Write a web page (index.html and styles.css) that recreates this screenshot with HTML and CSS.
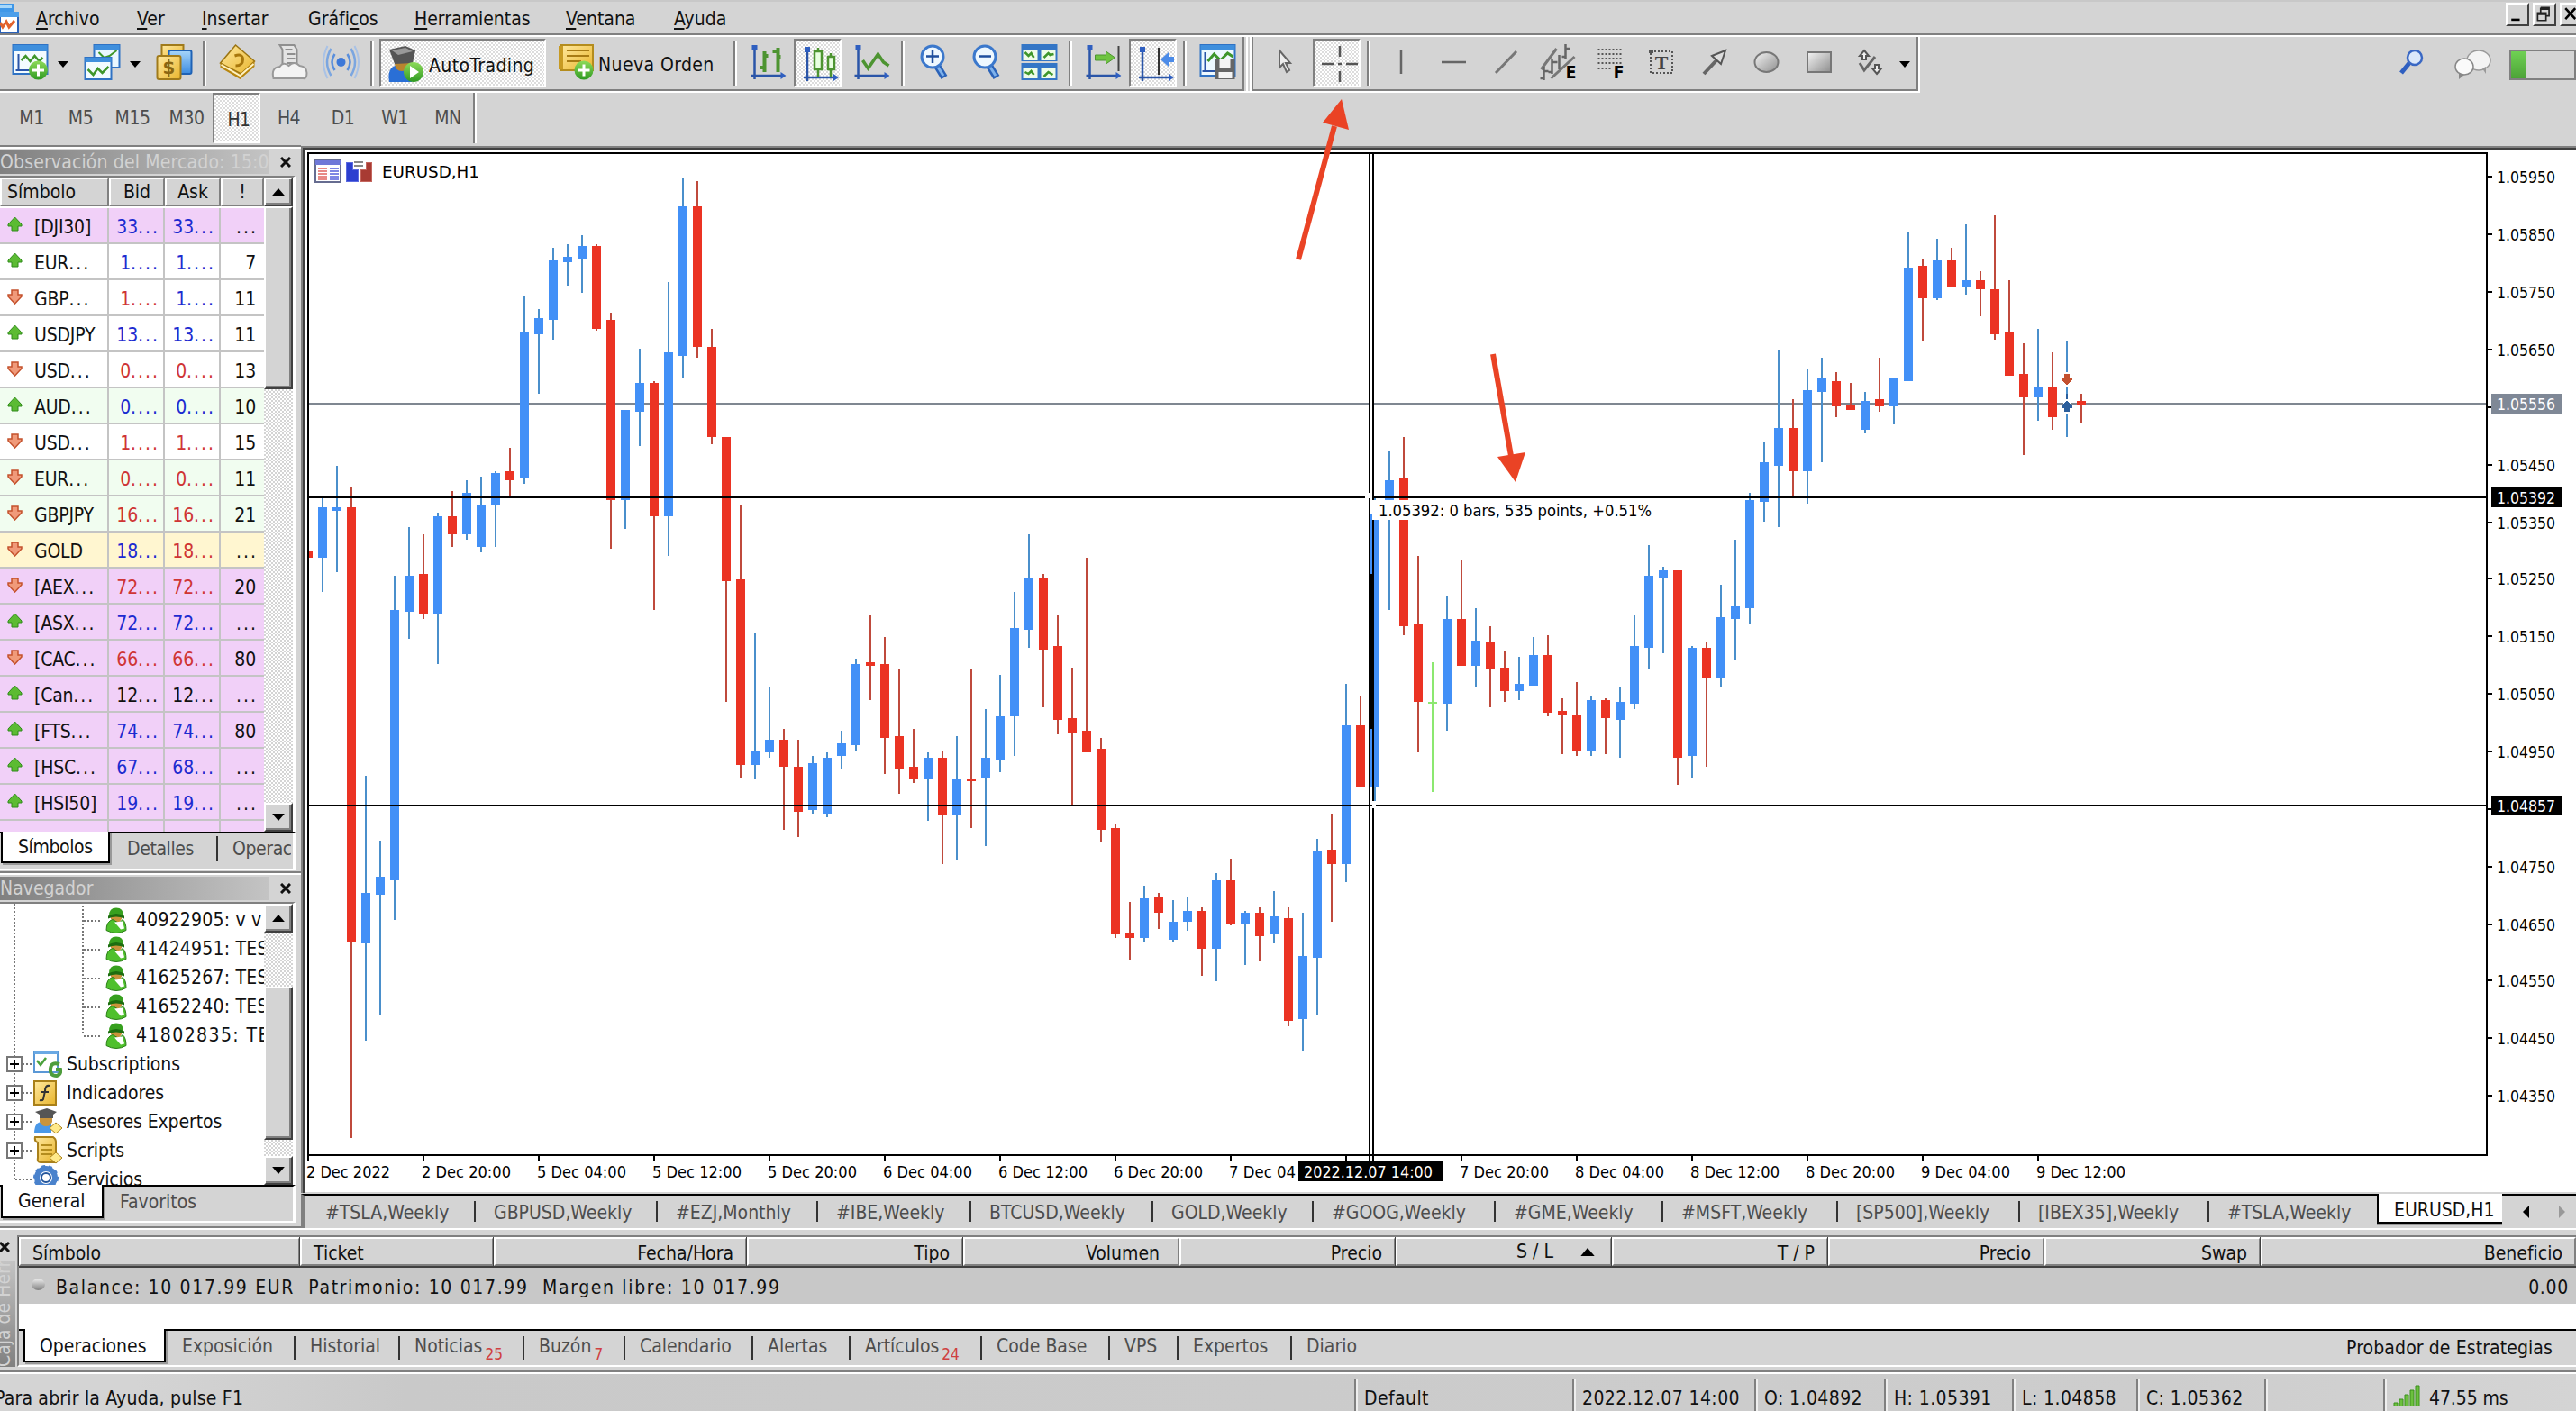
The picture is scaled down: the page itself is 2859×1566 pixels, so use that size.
FILE: index.html
```html
<!DOCTYPE html>
<html lang="es">
<head>
    <meta charset="UTF-8">
    <meta name="viewport" content="width=device-width, initial-scale=1.0">
    <title>EURUSD,H1</title>
    <link rel="stylesheet" href="styles.css">
</head>
<body>
    <!-- shared icon parts -->
    <svg width="0" height="0" class="defs">
        <defs>
            <linearGradient id="gold" x1="0" y1="0" x2="1" y2="1"><stop offset="0" stop-color="#ffe9a0"/><stop offset="1" stop-color="#e9b52c"/></linearGradient>
            <linearGradient id="blue" x1="0" y1="0" x2="0" y2="1"><stop offset="0" stop-color="#a8d6fa"/><stop offset="1" stop-color="#3b8be0"/></linearGradient>
            <linearGradient id="green" x1="0" y1="0" x2="0" y2="1"><stop offset="0" stop-color="#8edb5a"/><stop offset="1" stop-color="#2f9a22"/></linearGradient>
            <linearGradient id="gray" x1="0" y1="0" x2="1" y2="1"><stop offset="0" stop-color="#f4f4f4"/><stop offset="1" stop-color="#8e8e8e"/></linearGradient>
            <symbol id="i-plus" viewBox="0 0 22 22"><circle cx="11" cy="11" r="10.5" fill="url(#green)"/><path d="M11 4.5v13M4.500 11h13" stroke="#fff" stroke-width="3"/></symbol>
            <symbol id="i-axes" viewBox="0 0 40 40"><path d="M5 3v36M1 35h36" stroke="#2a55a8" stroke-width="2.500"/><path d="M2 1h6v6H2zM34 31l6 4-6 4z" fill="#2f5fc0"/></symbol>
            <symbol id="i-user" viewBox="0 0 24 30"><path d="M4 10Q4 1 12 1t8 9l-3 2H7z" fill="#37a01e"/><path d="M6 10h12v3q-2 5-6 5t-6-5z" fill="#c9933a"/><path d="M3 10q9-5 18 0v3q-9-4-18 0z" fill="#1d6d10"/><path d="M1 26q0-10 7-12l7 4 4-4q4 3 4 12-11 6-22 0z" fill="#4fc02c" stroke="#2b7f17"/><path d="M10 17l9-1 2 8-4 1z" fill="#fff"/></symbol>
            <symbol id="i-caret" viewBox="0 0 12 7"><path d="M0 0h12L6 7z"/></symbol>
        </defs>
    </svg>

    <div class="menubar">
        <svg class="app-icon" viewBox="0 0 22 33"><path d="M0 0h16v9H0z" fill="#3f97e8"/><path d="M0 2h13v3H0z" fill="#a8d8fa"/><path d="M0 10h20v22H0z" fill="#fff" stroke="#2b62b8" stroke-width="2"/><path d="M0 9h21v6H0z" fill="#4b9eea"/><path d="M0 21l3 5 4-6 3 6 6-7" fill="none" stroke="#e2622c" stroke-width="3"/></svg>
        <span><u>A</u>rchivo</span>
        <span><u>V</u>er</span>
        <span><u>I</u>nsertar</span>
        <span>Gráfi<u>c</u>os</span>
        <span><u>H</u>erramientas</span>
        <span><u>V</u>entana</span>
        <span><u>A</u>yuda</span>
        <div class="win-buttons">
            <svg viewBox="0 0 26 26"><path d="M5 20h11" stroke="#000" stroke-width="3"/></svg>
            <svg viewBox="0 0 26 26"><path d="M8 4h11v11h-4M8 4v6M8 6h11M4 11h11v10H4zM4 13h11" fill="none" stroke="#222" stroke-width="2"/></svg>
            <svg viewBox="0 0 26 26"><path d="M5 5l13 14M18 5L5 19" stroke="#000" stroke-width="3"/></svg>
        </div>
    </div>

    <div class="toolbar-row">
        <div class="toolbar">
            <svg class="ico" viewBox="0 0 40 40"><path d="M1 1h38v32H1z" fill="#f2fbff" stroke="#2f72c4" stroke-width="2"/><path d="M1 1h38v7H1z" fill="#3f8fdd"/><path d="M7 11v19M4 29h30" stroke="#2a55a8" stroke-width="2"/><path d="M10 18l5-5 5 6 5-6 5 6 4-4" fill="none" stroke="#3e962b" stroke-width="2.500"/><use href="#i-plus" x="18" y="18" width="22" height="22"/></svg>
            <svg class="caret"><use href="#i-caret"/></svg>
            <svg class="ico" viewBox="0 0 40 40"><path d="M11 1h28v25H11z" fill="#eaf7ff" stroke="#2f72c4" stroke-width="2"/><path d="M11 1h28v6H11z" fill="#3f8fdd"/><path d="M16 9l6 6 6-2 8-6" fill="none" stroke="#3e962b" stroke-width="2"/><path d="M1 15h29v24H1z" fill="#f2fbff" stroke="#2f72c4" stroke-width="2"/><path d="M1 15h29v5H1z" fill="#3f8fdd"/><path d="M4 28l6 6 5-7 5 5 7-7" fill="none" stroke="#3e962b" stroke-width="2.500"/></svg>
            <svg class="caret"><use href="#i-caret"/></svg>
            <svg class="ico" viewBox="0 0 40 40"><path d="M6 1h24v16H6z" fill="url(#gold)" stroke="#a07a1a" stroke-width="2"/><rect x="14" y="7" width="25" height="26" rx="2" fill="url(#blue)" stroke="#1f62b5" stroke-width="2"/><rect x="1" y="13" width="26" height="26" rx="2" fill="url(#gold)" stroke="#a07a1a" stroke-width="2"/><text x="14" y="33" class="glyph" font-size="22" fill="#8a6510">$</text></svg>
            <i class="sep"></i>
            <svg class="ico" viewBox="0 0 40 40"><path d="M18 1l21 18-15 14L1 21z" fill="url(#gold)" stroke="#9b7412" stroke-width="1.500"/><path d="M1 21l22 12v6L1 26zM23 33l16-14v6L23 39z" fill="#b8860f"/><path d="M2 23l21 12 15-13" fill="none" stroke="#fff3c4" stroke-width="2"/><path d="M17 13q9-3 9 4t-8 7" fill="none" stroke="#a8770c" stroke-width="3"/></svg>
            <svg class="ico" viewBox="0 0 40 40"><path d="M9 1h16l3 5v24H12V6z" fill="#e4e4e4" stroke="#8f8f8f" stroke-width="2"/><path d="M15 6h8M17 11h9M17 16h9M17 21h9" stroke="#8f8f8f" stroke-width="2"/><path d="M2 38q-3-12 7-13 4-6 10-1 6-6 12 0 8 1 8 8t-4 6z" fill="#f3f3f3" stroke="#999" stroke-width="2"/></svg>
            <svg class="ico" viewBox="0 0 40 40"><circle cx="20" cy="20" r="5" fill="#3c78d8"/><path d="M13 11q-6 9 0 18M27 11q6 9 0 18" fill="none" stroke="#5a8fdc" stroke-width="2.500"/><path d="M9 5q-9 15 0 30M31 5q9 15 0 30" fill="none" stroke="#7ba6e0" stroke-width="2.500"/><path d="M5 2q-9 18 0 36M35 2q9 18 0 36" fill="none" stroke="#a9c2e6" stroke-width="2"/></svg>
            <i class="sep"></i>
            <div class="tb-button pressed auto">
                <svg class="ico" viewBox="0 0 40 40"><path d="M2 40q-3-16 9-19l12 3 4 16z" fill="#2a6fd6"/><path d="M8 12h18v8q-3 8-10 8t-8-8z" fill="#b9842e"/><path d="M2 4l18-4 11 5-3 14-20 1z" fill="#555"/><path d="M5 5l15-3 8 4-16 4z" fill="#999"/><circle cx="29" cy="29" r="11" fill="url(#green)"/><path d="M25 22l10 7-10 7z" fill="#fff"/></svg>
                <span>AutoTrading</span>
            </div>
            <div class="tb-button order">
                <svg class="ico" viewBox="0 0 40 40"><path d="M3 1h36v28H3z" fill="url(#gold)" stroke="#b48c1d" stroke-width="2"/><path d="M10 7h25M10 13h25M10 19h16" stroke="#a87b14" stroke-width="2"/><path d="M1 2h5v26H1z" fill="#c79a23"/><use href="#i-plus" x="18" y="18" width="22" height="22"/></svg>
                <span>Nueva Orden</span>
            </div>
            <i class="sep"></i>
            <svg class="ico" viewBox="0 0 40 40"><use href="#i-axes"/><path d="M16 8v23M11 26h5M16 13h4M31 4v27M25 8h6M31 14h3" stroke="#4d9431" stroke-width="4" fill="none"/></svg>
            <div class="tb-button pressed"><svg class="ico" viewBox="0 0 40 40"><use href="#i-axes"/><path d="M17 2v32M31 8v26" stroke="#4d9431" stroke-width="2.500"/><path d="M13 6h8v20h-8zM28 12h7v14h-7z" fill="#e8ffe0" stroke="#4d9431" stroke-width="2.500"/></svg></div>
            <svg class="ico" viewBox="0 0 40 40"><use href="#i-axes"/><path d="M10 18l6 9 11-16 6 9 6 4" fill="none" stroke="#4d9431" stroke-width="3.500"/></svg>
            <i class="sep"></i>
            <svg class="ico lens" viewBox="0 0 34 40"><path d="M20 24l8 13" stroke="#2a62b8" stroke-width="8"/><path d="M20 24l7 11" stroke="#7eb2ec" stroke-width="3"/><circle cx="15" cy="14" r="12" fill="#eef8ff" stroke="#3b78cc" stroke-width="3"/><path d="M15 7v14M8 13.500h14" stroke="#1f4f9e" stroke-width="2.500"/></svg>
            <svg class="ico lens" viewBox="0 0 34 40"><path d="M20 24l8 13" stroke="#2a62b8" stroke-width="8"/><path d="M20 24l7 11" stroke="#7eb2ec" stroke-width="3"/><circle cx="15" cy="14" r="12" fill="#eef8ff" stroke="#3b78cc" stroke-width="3"/><path d="M8 13.500h14" stroke="#1f4f9e" stroke-width="2.500"/></svg>
            <svg class="ico" viewBox="0 0 40 40"><path d="M0 0h40v19H0zM0 21h40v19H0z" fill="#3476c6"/><path d="M2 6h16v12H2zM22 6h16v12H22zM2 27h16v11H2zM22 27h16v11H22z" fill="#effce8"/><path d="M4 9l4 4 3-3 3 5M25 15l5-5 2 2 4-1M4 31l4 2 3-3 3 4M25 36l5-5 5 3" fill="none" stroke="#3e962b" stroke-width="2.500"/></svg>
            <i class="sep"></i>
            <svg class="ico" viewBox="0 0 40 40"><use href="#i-axes"/><path d="M37 2v28" stroke="#444" stroke-width="2"/><path d="M11 12h12V8l10 7-10 7v-4H11z" fill="#6fc441" stroke="#4d9431"/></svg>
            <div class="tb-button pressed"><svg class="ico" viewBox="0 0 40 40"><use href="#i-axes"/><path d="M23 2v30" stroke="#333" stroke-width="2"/><path d="M40 12h-6V7l-9 8 9 8v-5h6z" fill="#4b8be8"/></svg></div>
            <i class="sep"></i>
            <svg class="ico" viewBox="0 0 40 40"><path d="M1 1h38v34H1z" fill="#eef9ff" stroke="#2f72c4" stroke-width="2"/><path d="M1 1h38v6H1z" fill="#3f8fdd"/><path d="M6 9v22M3 30h14" stroke="#2a55a8" stroke-width="2"/><path d="M9 19l7-8 7 7 8-8 6 4" fill="none" stroke="#3e962b" stroke-width="3"/><path d="M17 17h22v22H17z" fill="#666"/><path d="M22 16h12v10H22zM21 31h15v7H21z" fill="#f4f4f4"/></svg>
            <i class="grip"></i>
            <svg class="ico tool" viewBox="0 0 28 28"><path d="M2 1v19l4-4 4 9 3-2-4-8h5z" fill="#eee" stroke="#666" stroke-width="2"/></svg>
            <div class="tb-button pressed"><svg class="ico" viewBox="0 0 40 40"><path d="M20 0v12M20 28v12M0 20h13M27 20h13M18 20h4" stroke="#555" stroke-width="2.500"/></svg></div>
            <i class="sep"></i>
            <svg class="ico tool" viewBox="0 0 28 28"><path d="M6 1v26" stroke="#666" stroke-width="2.500"/></svg>
            <svg class="ico tool" viewBox="0 0 28 28"><path d="M0 14h27" stroke="#666" stroke-width="2.500"/></svg>
            <svg class="ico tool" viewBox="0 0 28 28"><path d="M1 26L24 2" stroke="#777" stroke-width="3"/></svg>
            <svg class="ico" viewBox="0 0 40 40"><path d="M1 28L18 5M12 38L38 14" stroke="#777" stroke-width="3"/><path d="M4 25v15M0 38h4M4 30h5M13 17v16M9 31h4M13 20h6M28 0v16M24 14h4M28 5h5M21 12v16" stroke="#666" stroke-width="2.500"/><text x="34" y="38" class="glyph" font-size="19">E</text></svg>
            <svg class="ico" viewBox="0 0 40 40"><path d="M0 6h28M0 11h28M0 16h28M0 21h28M0 27h15" stroke="#555" stroke-width="2" stroke-dasharray="2 2"/><text x="23" y="38" class="glyph" font-size="19">F</text></svg>
            <svg class="ico tool" viewBox="0 0 28 28"><path d="M2 2h24v24H2z" fill="none" stroke="#555" stroke-width="2" stroke-dasharray="2 2"/><path d="M0 0h5v4H0z" fill="#555"/><text x="14" y="22" class="glyph serif" font-size="22" fill="#444">T</text></svg>
            <svg class="ico tool" viewBox="0 0 28 28"><path d="M2 27L16 12" stroke="#666" stroke-width="4"/><path d="M11 7L26 1l-5 15z" fill="#ddd" stroke="#555" stroke-width="2"/></svg>
            <svg class="ico tool" viewBox="0 0 28 28"><ellipse cx="14.500" cy="14" rx="13" ry="11" fill="url(#gray)" stroke="#777" stroke-width="2"/></svg>
            <svg class="ico tool" viewBox="0 0 28 28"><path d="M1 3h26v22H1z" fill="url(#gray)" stroke="#777" stroke-width="2"/></svg>
            <svg class="ico tool" viewBox="0 0 28 28"><path d="M7 1l5 6H9v4H5V7H2zM21 27l5-6h-3v-4h-4v4h-3z" fill="#eee" stroke="#555" stroke-width="2"/><path d="M2 15l5 8L19 8" fill="none" stroke="#666" stroke-width="3"/></svg>
            <svg class="caret"><use href="#i-caret"/></svg>
        </div>
        <div class="tools-right">
            <svg class="search" viewBox="0 0 28 28"><path d="M2 26l9-11" stroke="#2f5fc0" stroke-width="5"/><ellipse cx="17" cy="9" rx="8" ry="8" fill="#dce9fb" stroke="#3a68c4" stroke-width="2.500"/></svg>
            <svg class="chat" viewBox="0 0 44 34"><ellipse cx="28" cy="12" rx="13" ry="11" fill="#f4f4f4" stroke="#999" stroke-width="1.500"/><path d="M32 21l4 6v-8z" fill="#999"/><ellipse cx="12" cy="19" rx="10" ry="9" fill="#fafafa" stroke="#888" stroke-width="1.500"/><path d="M6 26l0 7 6-5z" fill="#888"/></svg>
            <div class="battery"><i></i></div>
        </div>
    </div>

    <div class="timeframes">
        <div class="tf-list">
            <span>M1</span><span>M5</span><span>M15</span><span>M30</span><span class="pressed">H1</span><span>H4</span><span>D1</span><span>W1</span><span>MN</span>
        </div>
    </div>

    <div class="workspace">
        <div class="side">
            <div class="panel market">
                <div class="caption"><span class="caption-text wide">Observación del Mercado: 15:0</span><svg class="close" viewBox="0 0 12 12"><path d="M1 1l10 10M11 1L1 11"/></svg></div>
                <div class="panel-body">
                    <div class="watch">
                        <div class="watch-head"><span>Símbolo</span><span>Bid</span><span>Ask</span><span>!</span></div>
                        <div class="watch-rows"></div>
                    </div>
                    <div class="scroll">
                        <b><svg><use href="#i-caret" class="flip"/></svg></b><i class="thumb"></i><i class="track"></i><b><svg><use href="#i-caret"/></svg></b>
                    </div>
                </div>
                <div class="side-tabs market-tabs"><span class="active">Símbolos</span><span>Detalles</span><span class="cut">Operac</span></div>
            </div><!--market-->

            <div class="panel navigator">
                <div class="caption"><span class="caption-text">Navegador</span><svg class="close" viewBox="0 0 12 12"><path d="M1 1l10 10M11 1L1 11"/></svg></div>
                <div class="panel-body">
                    <div class="tree">
                        <div class="account"><svg><use href="#i-user"/></svg>40922905: v v</div>
                        <div class="account"><svg><use href="#i-user"/></svg>41424951: TES</div>
                        <div class="account"><svg><use href="#i-user"/></svg>41625267: TES</div>
                        <div class="account"><svg><use href="#i-user"/></svg>41652240: TES</div>
                        <div class="account last"><svg><use href="#i-user"/></svg>41802835: TE</div>
                        <div class="node"><i class="plus"></i><svg viewBox="0 0 32 32"><path d="M1 2h26v23H1z" fill="#fff" stroke="#5a98d6" stroke-width="2"/><path d="M1 1h26v4H1z" fill="#6aa9e4"/><path d="M4 12l4 5 6-8" fill="none" stroke="#4aa13c" stroke-width="2.500"/><path d="M29 16q-9-3-10 5t7 8q5-2 4-7h-5" fill="none" stroke="#4d9c3c" stroke-width="4"/></svg>Subscriptions</div>
                        <div class="node"><i class="plus"></i><svg viewBox="0 0 32 32"><path d="M1 3h24v26H1z" fill="url(#gold)" stroke="#a9801a" stroke-width="2"/><path d="M18 8q-5-1-5 6l-2 9q-1 2-4 1M8 15h9" fill="none" stroke="#333" stroke-width="2"/></svg>Indicadores</div>
                        <div class="node"><i class="plus"></i><svg viewBox="0 0 32 32"><path d="M1 29q0-13 9-13l10 3v10z" fill="#4a98e8"/><path d="M7 9h14v7q-2 5-7 5t-7-5z" fill="#c9943c"/><path d="M2 5l13-4 11 4-4 3v4H7V8z" fill="#555"/><path d="M25 17l7 6-7 6-7-6z" fill="#ffe98a" stroke="#a9801a"/></svg>Asesores Expertos</div>
                        <div class="node"><i class="plus"></i><svg viewBox="0 0 32 32"><path d="M2 1h20q3 2 3 5v23H8q-4 0-3-5V7Q1 6 2 1z" fill="url(#gold)" stroke="#a9801a" stroke-width="2"/><path d="M9 10h12M9 15h12M9 20h12" stroke="#b48c1d" stroke-width="2"/><path d="M25 18l7 6-7 6-7-6z" fill="#ffe98a" stroke="#a9801a"/></svg>Scripts</div>
                        <div class="node"><i class="plus none"></i><svg viewBox="0 0 32 32"><circle cx="14" cy="14" r="10" fill="none" stroke="#4a82cc" stroke-width="6"/><circle cx="14" cy="14" r="13" fill="none" stroke="#4a82cc" stroke-width="2" stroke-dasharray="4 4"/><circle cx="14" cy="14" r="5" fill="#fff" stroke="#24569c" stroke-width="2"/><path d="M20 24h12v6H20z" fill="#4a82cc"/></svg>Servicios</div>
                    </div>
                    <div class="scroll nav-scroll">
                        <b><svg><use href="#i-caret" class="flip"/></svg></b><i class="track first"></i><i class="thumb"></i><i class="track"></i><b><svg><use href="#i-caret"/></svg></b>
                    </div>
                </div>
                <div class="side-tabs nav-tabs"><span class="active">General</span><span>Favoritos</span></div>
            </div><!--navigator-->
        </div>

        <div class="chart-area">
            <div class="chart-frame"><svg id="chart" viewBox="338 166 2521 1157"></svg></div>
            <div class="chart-tabs">
                <span>#TSLA,Weekly</span><span>GBPUSD,Weekly</span><span>#EZJ,Monthly</span><span>#IBE,Weekly</span><span>BTCUSD,Weekly</span><span>GOLD,Weekly</span><span>#GOOG,Weekly</span><span>#GME,Weekly</span><span>#MSFT,Weekly</span><span>[SP500],Weekly</span><span>[IBEX35],Weekly</span><span>#TSLA,Weekly</span><span class="active">EURUSD,H1</span>
                <svg class="tab-arrows" viewBox="0 0 60 16"><path d="M8 1v14L1 8z"/><path d="M41 1v14l7-7z" fill="#999"/></svg>
            </div>
        </div>
    </div><!--workspace-->

    <div class="terminal">
        <div class="terminal-side">
            <svg class="close" viewBox="0 0 12 12"><path d="M1 1l10 10M11 1L1 11"/></svg>
            <div class="vertical"><span>Caja de Herramientas</span></div>
        </div>
        <div class="terminal-main">
            <div class="orders-head">
                <span>Símbolo</span><span>Ticket</span><span>Fecha/Hora</span><span>Tipo</span><span class="volume">Volumen</span><span>Precio</span><span class="sorted">S / L<svg><use href="#i-caret" class="flip"/></svg></span><span>T / P</span><span>Precio</span><span>Swap</span><span>Beneficio</span>
            </div>
            <div class="balance"><i class="dot"></i><span>Balance: 10 017.99 EUR&nbsp; Patrimonio: 10 017.99&nbsp; Margen libre: 10 017.99</span><span class="profit">0.00</span></div>
            <div class="blank"></div>
            <div class="terminal-tabs">
                <span class="active">Operaciones</span><span>Exposición</span><span>Historial</span><span>Noticias<sub>25</sub></span><span>Buzón<sub>7</sub></span><span>Calendario</span><span>Alertas</span><span>Artículos<sub>24</sub></span><span>Code Base</span><span>VPS</span><span>Expertos</span><span>Diario</span>
                <span class="tester">Probador de Estrategias</span>
            </div>
        </div>
    </div><!--terminal-->

    <div class="statusbar">
        <span class="help">Para abrir la Ayuda, pulse F1</span><span>Default</span><span>2022.12.07 14:00</span><span>O: 1.04892</span><span>H: 1.05391</span><span>L: 1.04858</span><span>C: 1.05362</span><span></span>
        <span><svg class="signal" viewBox="0 0 30 24"><path d="M1 20h4v4H1zM7 16h4v8H7zM13 11h4v13h-4zM19 6h4v18h-4zM25 1h4v23h-4z" fill="#6cc03e" stroke="#3b8f1d"/></svg>47.55 ms</span>
    </div>

    <svg class="pointers" viewBox="0 0 2859 600">
        <path d="M1441 288L1481 140" /><path d="M1489 110L1468 136L1497 144Z" class="head"/>
        <path d="M1657 393L1677 506" /><path d="M1682 535L1662 507L1693 502Z" class="head"/>
    </svg>
    <script src="script.js"></script>
</body>
</html>
```
FILE: styles.css
```css
*{
    margin : 0;
    padding : 0;
    box-sizing: border-box;
}
body{
    width: 2859px;
    height: 1566px;
    overflow: hidden;
    position: relative;
    display: flex;
    flex-direction: column;
    background-color: #d4d4d4;
    color: #111;
    font-family: 'DejaVu Sans Condensed', 'DejaVu Sans', sans-serif;
    font-size: 21px;
    white-space: nowrap;
}
svg{
    display: block;
    flex: none;
}
.defs{
    position: absolute;
}
i, b{
    display: block;
    flex: none;
}

/* menu */
.menubar{
    height: 41px;
    flex: none;
    display: grid;
    grid-template-columns: 40px 112px 72px 118px 118px 168px 120px 2033px 78px;
    align-items: center;
    border-top: 2px solid #c8c8c8;
    border-bottom: 2px solid #fff;
    box-shadow: inset 0 -2px #808080;
}
.menubar span{
    padding-top: 1px;
}
.menubar u{
    text-underline-offset: 3px;
    text-decoration-thickness: 2px;
}
.app-icon{
    width: 22px;
    height: 33px;
}
.win-buttons{
    display: flex;
    gap: 4px;
    align-self: start;
    padding-top: 1px;
}
.win-buttons svg{
    width: 26px;
    height: 26px;
    border: 2px solid;
    border-color: #fff #404040 #404040 #fff;
}

/* toolbars */
.toolbar-row{
    height: 62px;
    flex: none;
    display: flex;
}
.toolbar{
    width: 2131px;
    padding-left: 13px;
    display: grid;
    grid-template-columns: 51px 29px 51px 29px 52px 18px 58px 57px 53px 10px 198px 195px 18px 49px 66px 53px 20px 58px 55px 53px 18px 49px 60px 18px 48px 39px 39px 60px 32px 51px 59px 50px 64px 57px 59px 57px 59px 57px 46px 21px;
    align-items: center;
    border-right: 2px solid #fff;
    border-bottom: 2px solid #fff;
    box-shadow: inset -2px -2px #808080;
}
.ico{
    width: 41px;
    height: 40px;
    margin-top: -4px;
    overflow: visible;
}
.ico.lens{
    width: 34px;
}
.ico.tool{
    width: 28px;
    height: 28px;
}
.caret{
    width: 12px;
    height: 7px;
}
.glyph{
    font-family: 'DejaVu Sans Condensed', sans-serif;
    font-weight: bold;
    text-anchor: middle;
}
.glyph.serif{
    font-family: 'Liberation Serif', serif;
}
.sep{
    width: 4px;
    height: 50px;
    margin-top: -2px;
    border-left: 2px solid #808080;
    border-right: 2px solid #fff;
}
.grip{
    width: 12px;
    height: 60px;
    border-left: 2px solid #808080;
    border-right: 2px solid #808080;
    background: linear-gradient(90deg, #d4d4d4 2px, #fff 2px 4px, #d4d4d4 4px 6px, #fff 6px);
}
.tb-button{
    height: 54px;
    display: flex;
    align-items: center;
    letter-spacing: 0.4px;
}
.pressed{
    background: repeating-conic-gradient(#fff 0 25%, #dcdcdc 0 50%) 0 0 / 4px 4px;
    border: 2px solid;
    border-color: #808080 #fff #fff #808080;
}
.tb-button.pressed{
    width: 53px;
    padding-left: 8px;
    margin-top: -2px;
}
.tb-button.auto{
    width: 185px;
    padding-left: 7px;
    gap: 6px;
}
.tb-button.auto span{
    margin-top: 5px;
}
.tb-button .ico{
    margin-top: 1px;
    width: 40px;
}
.tb-button.order{
    gap: 5px;
}
.order .ico{
    margin-top: -4px;
}
.order span{
    margin-top: 1px;
}
.tools-right{
    flex: 1;
    display: flex;
    align-items: flex-start;
    justify-content: flex-end;
    padding-top: 14px;
}
.search{
    width: 28px;
    height: 28px;
    margin-right: 32px;
}
.chat{
    width: 44px;
    height: 34px;
    margin-right: 18px;
}
.battery{
    width: 74px;
    height: 34px;
    border: 2px solid #808080;
}
.battery i{
    width: 16px;
    height: 30px;
    background: linear-gradient(#6fd153, #4da338);
}
.timeframes{
    height: 58px;
    flex: none;
}
.tf-list{
    width: 529px;
    height: 56px;
    padding-left: 7px;
    display: grid;
    grid-template-columns: 56px 53px 62px 58px 53px 63px 57px 58px 60px;
    align-items: center;
    text-align: center;
    color: #4d4d4d;
    letter-spacing: -0.5px;
    border-right: 2px solid #fff;
    box-shadow: inset -2px 0 #808080;
}
.tf-list .pressed{
    height: 56px;
    line-height: 56px;
    padding-left: 5px;
    color: #333;
}

/* left side */
.workspace{
    height: 1202px;
    flex: none;
    display: flex;
}
.side{
    width: 334px;
}
.panel{
    border-top: 2px solid #808080;
    box-shadow: inset 0 2px #fff;
    padding-top: 4px;
}
.market{
    height: 806px;
}
.navigator{
    height: 396px;
    border-bottom: 2px solid #808080;
}
.caption{
    height: 26px;
    width: 334px;
    display: flex;
    align-items: center;
}
.caption-text{
    width: 299px;
    height: 26px;
    line-height: 26px;
    overflow: hidden;
    color: #d2d2d2;
    background: linear-gradient(90deg, #808080, #c4c4c4);
}
.caption-text.wide{
    letter-spacing: 0.15px;
}
.close{
    width: 12px;
    height: 12px;
    margin-left: 12px;
    fill: none;
    stroke: #111;
    stroke-width: 3;
}
.panel-body{
    display: flex;
    width: 328px;
    margin-top: 2px;
    border-top: 2px solid #808080;
    border-right: 3px solid #fff;
}
.market .panel-body{
    height: 728px;
    border-right: 3px solid #fff;
}
.watch{
    width: 293px;
    overflow: hidden;
    background-color: #fff;
}
.watch-head, .watch-row{
    display: grid;
    grid-template-columns: 121px 62px 62px 48px;
}
.watch-head{
    height: 34px;
    background-color: #d4d4d4;
    text-align: center;
    border-bottom: 2px solid #fff;
}
.watch-head span{
    height: 32px;
    line-height: 29px;
    border: 2px solid;
    border-color: #fff #808080 #808080 #fff;
}
.watch-head span:first-child{
    text-align: left;
    padding-left: 6px;
}
.watch-row{
    height: 40px;
    line-height: 43px;
    border-bottom: 2px solid #c4c4c4;
    letter-spacing: -0.2px;
}
.watch-row > *{
    height: 38px;
    text-align: right;
    padding-right: 6px;
    border-right: 2px solid #c4c4c4;
}
.watch-row > :last-child{
    border-right: 0;
    padding-right: 9px;
}
.watch-row .name{
    display: flex;
    padding-left: 8px;
}
.watch-row em{
    font-style: normal;
    letter-spacing: 2px;
    margin-right: -2px;
}
.watch-row svg{
    width: 17px;
    height: 17px;
    margin: 10px 13px 0 0;
}
.pink{
    background-color: #f1d0f8;
}
.mint{
    background-color: #f1fdf0;
}
.cream{
    background-color: #fff6d0;
}
.up{
    color: #1c2bd0;
}
.down{
    color: #cf3535;
}
.scroll{
    width: 32px;
    display: flex;
    flex-direction: column;
}
.scroll b, .thumb{
    background-color: #d4d4d4;
    border: 2px solid;
    border-color: #fff #404040 #404040 #fff;
    box-shadow: inset -2px -2px #808080;
}
.scroll b{
    height: 32px;
    display: flex;
    align-items: center;
    justify-content: center;
}
.scroll b svg{
    width: 14px;
    height: 8px;
}
.flip{
    transform: rotate(180deg);
    transform-box: fill-box;
    transform-origin: center;
}
.thumb{
    height: 203px;
}
.track{
    flex: 1;
    background: repeating-conic-gradient(#fff 0 25%, #d4d4d4 0 50%) 0 0 / 4px 4px;
}
.side-tabs{
    width: 328px;
    height: 43px;
    display: grid;
    border-top: 2px solid #000;
    border-right: 3px solid #fff;
    border-bottom: 2px solid #fff;
    color: #4d4d4d;
    line-height: 34px;
}
.side-tabs .active{
    height: 35px;
    margin: -2px 0 0 1px;
    padding-left: 17px;
    line-height: 35px;
    color: #111;
    background-color: #fff;
    border: solid #000;
    border-width: 0 2px 2px;
    box-shadow: 2px 2px #999;
}
.market-tabs{
    grid-template-columns: 141px 99px 83px;
    letter-spacing: -0.4px;
}
.market-tabs .active{
    width: 121px;
}
.side-tabs .cut{
    overflow: hidden;
    height: 28px;
    line-height: 28px;
    margin-top: 3px;
    padding-left: 16px;
    border-left: 2px solid #333;
}
.nav-tabs{
    grid-template-columns: 133px 191px;
    height: 42px;
}
.nav-tabs .active{
    width: 114px;
    height: 37px;
    line-height: 37px;
}
.navigator .panel-body{
    height: 314px;
}
.tree{
    width: 293px;
    overflow: hidden;
    background-color: #fff;
    padding-top: 2px;
    background-image: repeating-linear-gradient(#777 0 2px, transparent 2px 4px);
    background-size: 2px 305px;
    background-position: 15px 0;
    background-repeat: no-repeat;
}
.account{
    height: 32px;
    padding-left: 92px;
    display: flex;
    align-items: center;
    gap: 10px;
    letter-spacing: 0.2px;
    background-image: repeating-linear-gradient(#777 0 2px, transparent 2px 4px), repeating-linear-gradient(90deg, #777 0 2px, transparent 2px 4px);
    background-size: 2px 32px, 20px 2px;
    background-position: 91px 0, 93px 16px;
    background-repeat: no-repeat;
}
.account.last{
    background-size: 2px 16px, 20px 2px;
    letter-spacing: 1.400px;
}
.account svg{
    width: 24px;
    height: 31px;
    margin-left: 25px;
}
.node{
    height: 32px;
    padding-left: 7px;
    display: flex;
    align-items: center;
    letter-spacing: -0.1px;
    background: repeating-linear-gradient(90deg, #777 0 2px, transparent 2px 4px) 17px 15px / 20px 2px no-repeat;
}
.node svg{
    width: 32px;
    height: 32px;
    margin: 0 5px 0 12px;
}
.plus{
    width: 18px;
    height: 18px;
    border: 2px solid #777;
    background: linear-gradient(#000, #000) 2px 6px / 10px 2px no-repeat, linear-gradient(#000, #000) 6px 2px / 2px 10px no-repeat, #fff;
}
.plus.none{
    visibility: hidden;
}
.nav-scroll .first{
    flex: none;
    height: 60px;
}
.nav-scroll .thumb{
    height: 170px;
}

/* chart */
.chart-area{
    width: 2525px;
}
.chart-frame{
    height: 1162px;
    margin-top: 1px;
    border: solid #808080;
    border-width: 2px 0 0 2px;
    box-shadow: inset 2px 2px #404040;
    padding: 2px 0 0 2px;
    overflow: hidden;
}
#chart{
    width: 2521px;
    height: 1157px;
    background-color: #fff;
    shape-rendering: crispEdges;
    font-size: 17.5px;
}
.chart-tabs{
    height: 38px;
    margin-top: 1px;
    display: grid;
    grid-template-columns: 190px 202px 178px 170px 202px 178px 202px 186px 194px 202px 210px 186px 139px 86px;
    border-top: 2px solid #000;
    border-left: 4px solid #808080;
    color: #4d4d4d;
}
.chart-tabs span{
    height: 23px;
    margin-top: 6px;
    line-height: 26px;
    border-right: 2px solid #333;
    padding-left: 20px;
}
.chart-tabs span:first-child{
    padding-left: 23px;
}
.chart-tabs span:nth-child(12){
    border: 0;
}
.chart-tabs .active{
    height: 33px;
    margin-top: -2px;
    line-height: 37px;
    overflow: hidden;
    color: #111;
    background-color: #fff;
    border: solid #000;
    border-width: 0 0 2px 2px;
    padding-left: 17px;
    box-shadow: 0 2px #999;
}
.tab-arrows{
    width: 60px;
    height: 16px;
    margin: 10px 0 0 22px;
}

/* terminal */
.terminal{
    height: 160px;
    flex: none;
    display: flex;
    border-top: 2px solid #fff;
    border-bottom: 2px solid #808080;
}
.terminal-side{
    width: 19px;
    padding-top: 13px;
}
.terminal-side .close{
    margin-left: -1px;
}
.vertical{
    width: 17px;
    height: 117px;
    margin-top: 10px;
    overflow: hidden;
    display: flex;
    align-items: flex-end;
    background: linear-gradient(#c4c4c4, #808080);
}
.vertical span{
    writing-mode: vertical-rl;
    transform: rotate(180deg);
    color: #d2d2d2;
    line-height: 24px;
    margin-left: -8px;
    height: 220px;
    flex: none;
}
.terminal-main{
    flex: 1;
    margin-top: 6px;
    border-top: 2px solid #808080;
    border-left: 2px solid #808080;
    border-bottom: 2px solid #fff;
    height: 146px;
}
.orders-head{
    height: 34px;
    display: grid;
    grid-template-columns: 312px 215px 281px 240px 240px 240px 240px 240px 240px 240px 350px;
    border-bottom: 2px solid #404040;
    text-align: right;
}
.orders-head span{
    height: 32px;
    line-height: 32px;
    padding-right: 13px;
    border: 2px solid;
    border-color: #fff #808080 #808080 #fff;
    box-shadow: -1px 0 #404040;
}
.orders-head .volume{
    padding-right: 20px;
}
.orders-head span:nth-child(-n+2){
    text-align: left;
    padding-left: 13px;
}
.orders-head .sorted{
    display: flex;
    justify-content: flex-end;
    align-items: center;
    padding-right: 17px;
    gap: 30px;
}
.sorted svg{
    width: 16px;
    height: 9px;
}
.balance{
    height: 40px;
    padding: 3px 8px 0 14px;
    display: flex;
    align-items: center;
    background-color: #c8c8c8;
    letter-spacing: 1.650px;
}
.dot{
    width: 15px;
    height: 13px;
    margin: -7px 12px 0 0;
    border-radius: 50%;
    background: linear-gradient(#eee, #808080);
}
.profit{
    margin-left: auto;
    letter-spacing: 0.7px;
}
.blank{
    height: 28px;
    background-color: #fff;
}
.terminal-tabs{
    height: 40px;
    display: grid;
    grid-template-columns: 165px 142px 116px 138px 112px 142px 108px 146px 142px 76px 126px 90px 1fr;
    border-top: 2px solid #000;
    color: #4d4d4d;
}
.terminal-tabs span{
    height: 26px;
    margin-top: 6px;
    line-height: 23px;
    border-right: 2px solid #333;
    padding-left: 16px;
}
.terminal-tabs .active{
    height: 37px;
    line-height: 38px;
    margin: -2px 2px 0 5px;
    padding-left: 16px;
    color: #111;
    background-color: #fff;
    border: solid #000;
    border-width: 0 2px 2px;
    box-shadow: 2px 2px #999;
}
.terminal-tabs sub{
    font-size: 17px;
    color: #cf4040;
    vertical-align: -8px;
    line-height: 1;
    margin-left: 3px;
}
.terminal-tabs span:nth-child(n+12){
    border: 0;
}
.terminal-tabs .tester{
    text-align: right;
    padding-right: 26px;
    line-height: 26px;
    letter-spacing: 0.1px;
    color: #111;
}

/* status */
.statusbar{
    flex: 1;
    display: grid;
    grid-template-columns: 1503px 242px 202px 144px 142px 138px 142px 132px 214px;
    border-top: 2px solid #fff;
    padding-top: 6px;
    background: linear-gradient(90deg, #d4d4d4 150px, #c9c9c9 450px, #cdcdcd 2400px, #d4d4d4);
    line-height: 42px;
    letter-spacing: 0.4px;
}
.statusbar span{
    border-left: 2px solid #808080;
    box-shadow: inset 2px 0 #eee;
    padding-left: 9px;
    overflow: hidden;
    display: flex;
}
.statusbar .help{
    border: 0;
    box-shadow: none;
    padding: 0;
    text-indent: -6px;
    letter-spacing: 0.2px;
}
.statusbar span:last-child{
    letter-spacing: -0.1px;
}
.signal{
    width: 30px;
    height: 24px;
    margin: 6px 10px 0 0;
}

/* marks drawn over the window */
.pointers{
    position: absolute;
    left: 0;
    top: 0;
    width: 2859px;
    height: 600px;
    stroke: #ea4325;
    stroke-width: 6;
    pointer-events: none;
}
.pointers .head{
    fill: #ea4325;
    stroke: none;
}
```
FILE: script.js
```js
// market watch: symbol, direction, bid, bid color, ask, ask color, spread, row color
const symbols = [
    ['[DJI30]', 'up', '33...', 'up', '33...', 'up', '...', 'pink'],
    ['EUR...', 'up', '1....', 'up', '1....', 'up', '7', ''],
    ['GBP...', 'down', '1....', 'down', '1....', 'up', '11', ''],
    ['USDJPY', 'up', '13...', 'up', '13...', 'up', '11', ''],
    ['USD...', 'down', '0....', 'down', '0....', 'down', '13', ''],
    ['AUD...', 'up', '0....', 'up', '0....', 'up', '10', 'mint'],
    ['USD...', 'down', '1....', 'down', '1....', 'down', '15', ''],
    ['EUR...', 'down', '0....', 'down', '0....', 'down', '11', 'mint'],
    ['GBPJPY', 'down', '16...', 'down', '16...', 'down', '21', 'mint'],
    ['GOLD', 'down', '18...', 'up', '18...', 'down', '...', 'cream'],
    ['[AEX...', 'down', '72...', 'down', '72...', 'down', '20', 'pink'],
    ['[ASX...', 'up', '72...', 'up', '72...', 'up', '...', 'pink'],
    ['[CAC...', 'down', '66...', 'down', '66...', 'down', '80', 'pink'],
    ['[Can...', 'up', '12...', '', '12...', '', '...', 'pink'],
    ['[FTS...', 'up', '74...', 'up', '74...', 'up', '80', 'pink'],
    ['[HSC...', 'up', '67...', 'up', '68...', 'up', '...', 'pink'],
    ['[HSI50]', 'up', '19...', 'up', '19...', 'up', '...', 'pink'],
    ['', '', '', '', '', '', '', 'pink']
];
const arrows = {
    up: '<svg viewBox="0 0 17 17"><path d="M8.500 0L16 8v2h-4v5H5v-5H1V8z" fill="#5cbb33" stroke="#2f8a1a"/></svg>',
    down: '<svg viewBox="0 0 17 17"><path d="M8.500 16L1 8V6h4V1h7v5h4v2z" fill="#f09a7a" stroke="#c4512c" stroke-width="1.500"/></svg>'
};
// trailing dots are set wider than the text
function dots(text){
    return text.replace(/\.+$/, '<em>$&</em>');
}
document.querySelector('.watch-rows').innerHTML = symbols.map(function(s){
    return `<div class="watch-row ${s[7]}"><div class="name">${arrows[s[1]] || ''}${dots(s[0])}</div>` +
        `<span class="${s[3]}">${dots(s[2])}</span><span class="${s[5]}">${dots(s[4])}</span><span>${dots(s[6])}</span></div>`;
}).join('');

// candles: color, wick top, wick bottom, body top, body bottom
const candles = [
    'r 611 619 611 619', 'b 553 657 563 619', 'b 517 635 563 567', 'r 541 1263 563 1045', 'b 861 1155 991 1047',
    'b 933 1127 973 993', 'b 639 1021 677 977', 'b 585 709 639 679', 'r 593 687 637 681', 'b 569 737 573 681',
    'r 545 607 573 593', 'b 533 599 547 593', 'b 529 613 561 607', 'b 523 607 525 561', 'r 497 551 523 533',
    'b 329 537 369 531', 'b 343 437 353 371', 'b 275 377 289 355', 'b 271 317 285 291', 'b 261 325 273 287',
    'r 271 367 273 365', 'r 347 609 355 555', 'b 455 587 455 555', 'b 387 495 425 457', 'r 423 677 425 573',
    'b 313 617 391 573', 'b 197 419 229 395', 'r 201 397 229 385', 'r 365 493 385 485', 'r 485 779 485 645',
    'r 561 863 643 849', 'b 703 865 833 849', 'b 763 841 821 835', 'r 809 921 821 851', 'r 821 929 851 901',
    'b 839 903 847 899', 'b 835 907 841 903', 'b 811 853 825 839', 'b 731 833 737 827', 'r 683 777 735 739',
    'r 707 859 737 819', 'r 743 881 817 853', 'r 809 869 851 865', 'b 835 911 841 865', 'r 833 959 841 905',
    'b 817 955 865 905', 'r 743 919 865 867', 'b 787 939 841 863', 'b 749 857 795 843', 'b 657 839 697 795',
    'b 593 719 641 699', 'r 637 785 641 721', 'r 683 815 717 799', 'r 741 893 797 813', 'r 619 835 811 835',
    'r 819 935 831 921', 'r 915 1041 919 1037', 'r 1001 1065 1035 1041', 'b 983 1045 997 1041', 'r 991 1031 995 1013',
    'b 999 1045 1023 1043', 'b 995 1033 1011 1023', 'r 1007 1083 1011 1053', 'b 969 1089 977 1053', 'r 953 1027 977 1025',
    'b 1011 1071 1013 1025', 'r 1007 1067 1013 1039', 'b 989 1047 1017 1037', 'r 1007 1139 1019 1133', 'b 1013 1167 1061 1131',
    'b 931 1127 945 1063', 'r 903 1023 943 959', 'b 759 979 805 959', 'r 773 873 805 873', 'b 553 893 571 873',
    'b 501 677 533 560', 'r 485 705 531 695', 'r 617 835 693 779', 'g 735 879 779 781', 'b 661 811 687 781',
    'r 621 739 687 739', 'b 675 763 711 739', 'r 695 785 713 743', 'r 723 779 741 767', 'b 729 777 759 767',
    'b 707 761 727 761', 'r 705 795 727 791', 'r 775 837 789 793', 'r 757 839 793 833', 'b 773 839 777 833',
    'r 775 837 777 797', 'b 763 841 779 799', 'b 683 787 717 781', 'b 605 743 639 719', 'b 629 725 633 641',
    'r 633 871 633 841', 'b 717 863 719 839', 'r 713 851 719 753', 'b 649 763 685 753', 'b 599 733 673 687',
    'b 547 693 555 675', 'b 491 579 513 557', 'b 389 585 475 517', 'r 443 551 475 523', 'b 409 559 433 523',
    'b 397 513 419 435', 'r 413 463 423 451', 'r 425 455 449 455', 'b 435 481 445 477', 'r 397 457 443 451',
    'b 419 471 419 451', 'b 257 423 297 423', 'r 287 379 295 331', 'b 265 333 289 331', 'r 275 319 289 319',
    'b 249 327 311 319', 'r 301 351 311 321', 'r 239 377 321 371', 'r 311 417 369 417', 'r 381 505 415 441',
    'b 365 467 429 441', 'r 391 477 429 463', 'b 379 485 0 0', 'r 437 469 445 449'
];
const body = { r: '#eb3323', b: '#4290f7', g: '#8ce870' };
const wick = { r: '#bf4a3c', b: '#4a8fcb', g: '#8ce870' };

function rect(x, y, w, h, fill){
    return `<rect x="${x}" y="${y}" width="${w}" height="${h}" fill="${fill}"/>`;
}
function label(x, y, text, width, fill){
    return `<text x="${x}" y="${y}" textLength="${width}" lengthAdjust="spacingAndGlyphs" fill="${fill || '#000'}">${text}</text>`;
}

let out = rect(343, 447, 2416, 2, '#7f8791');

candles.forEach(function(c, i){
    const p = c.split(' ');
    const x = 342 + i * 16;
    out += rect(x - 1, p[1], 2, p[2] - p[1], wick[p[0]]);
    out += rect(x - 5, p[3], 10, p[4] - p[3], body[p[0]]);
});
out += rect(338, 600, 3, 30, '#fff');

// buy and sell marks on the last closed bar
out += rect(2292, 413, 4, 16, '#fff') + '<path d="M2291 415h6v4h3v2l-6 7-6-7v-2h3z" fill="#c4512f"/>';
out += rect(2293, 437, 2, 6, '#2a5f9e') + rect(2290, 443, 8, 16, '#fff') + '<path d="M2291 457h6v-4h3v-2l-6-7-6 7v2h3z" fill="#2c5f9c"/>';

// frame
out += rect(341, 169, 2, 1114, '#000') + rect(341, 169, 2420, 2, '#000') + rect(2759, 169, 2, 1114, '#000') + rect(341, 1281, 2420, 2, '#000');

// crosshair and measuring line
out += rect(1521, 171, 2, 376, '#fff') + rect(1521, 895, 2, 386, '#fff');
out += rect(343, 551, 1172, 2, '#000') + rect(1523, 551, 1238, 2, '#000');
out += rect(343, 893, 2418, 2, '#000');
out += rect(1519, 169, 2, 1120, '#000') + rect(1523, 169, 2, 1120, '#000');
out += rect(1521, 637, 2, 172, '#000');
out += rect(1515, 547, 6, 4, '#fff') + rect(1515, 551, 8, 2, '#fff');
out += rect(1523, 889, 4, 8, '#fff');
out += rect(1523, 555, 314, 22, '#fff') + label(1530, 573, '1.05392: 0 bars, 535 points, +0.51%', 303);

// price axis
[196, 260, 324, 388, 452, 516, 580, 642, 706, 770, 834, 898, 962, 1026, 1088, 1152, 1216].forEach(function(y, i){
    out += rect(2761, y - 1, 5, 2, '#000');
    if(i != 4 && i != 11){
        out += label(2771, y + 7, (1.0595 - i * 0.001).toFixed(5), 65);
    }
});
[[448, '1.05556', '#7f8896'], [552, '1.05392', '#000'], [894, '1.04857', '#000']].forEach(function(m){
    out += rect(2765, m[0] - 11, 78, 22, m[2]) + label(2771, m[0] + 7, m[1], 65, '#fff');
});

// time axis, the ninth label runs under the crosshair date
['2 Dec 2022', '2 Dec 20:00', '5 Dec 04:00', '5 Dec 12:00', '5 Dec 20:00', '6 Dec 04:00', '6 Dec 12:00', '6 Dec 20:00',
 '7 Dec 04', '', '7 Dec 20:00', '8 Dec 04:00', '8 Dec 12:00', '8 Dec 20:00', '9 Dec 04:00', '9 Dec 12:00'].forEach(function(t, i){
    const x = 341 + i * 128;
    out += rect(x, 1283, 2, 6, '#000');
    if(t){
        out += label(x - 1, 1307, t, i == 0 ? 93 : i == 8 ? 74 : 99);
    }
});
out += rect(1441, 1289, 160, 22, '#000') + label(1447, 1307, '2022.12.07 14:00', 143, '#fff');

// title
out += label(424, 197, 'EURUSD,H1', 108);
out += '<path d="M350 178h28v24h-28z" fill="#fff" stroke="#666c90" stroke-width="2"/><path d="M350 178h28v5h-28z" fill="#6f78d8"/>';
for(let y = 186; y < 199; y += 3){
    out += rect(353, y, 10, 2, '#e88a86') + rect(366, y, 10, 2, '#7d86e4');
}
out += '<path d="M384 180h7v8h6v13h-13z" fill="#2c3fd0" stroke="#5b6ae0"/><path d="M412 180h-6v8h-6v13h12z" fill="#a83b33" stroke="#c4665e"/>';
out += rect(393, 179, 10, 2, '#888') + rect(393, 183, 10, 2, '#888');

document.querySelector('#chart').innerHTML = out;
```
